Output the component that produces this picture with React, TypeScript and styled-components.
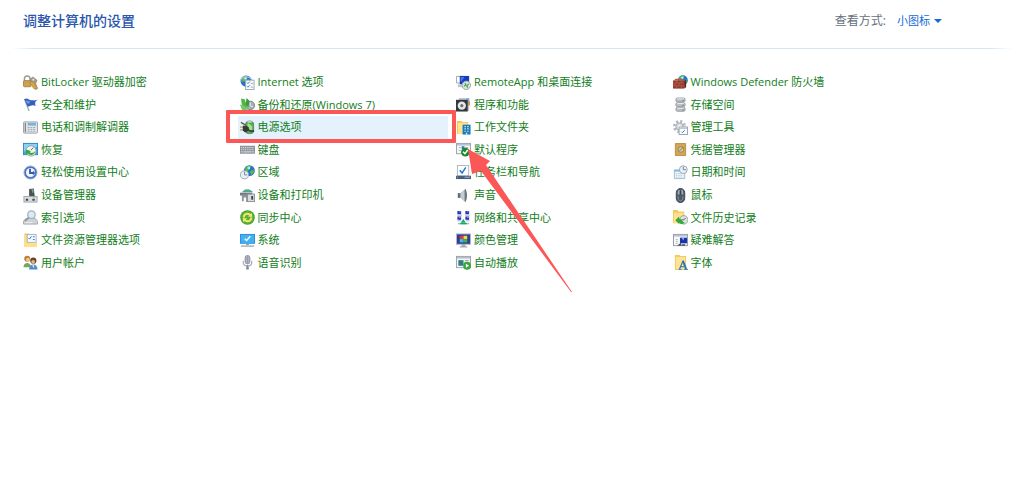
import React from "react";
import styled, { createGlobalStyle } from "styled-components";

const GlobalStyle = createGlobalStyle`
  body {
    margin: 0;
    background: #fff;
    font-family: "Open Sans", "Noto Sans CJK SC", sans-serif;
  }
`;

const Page = styled.main`
  display: flex;
  flex-direction: column;
  min-height: 100vh;
`;

const Header = styled.header`
  display: flex;
  align-items: center;
  justify-content: space-between;
  height: 41px;
  padding: 0 82px 0 23px;
`;

const Title = styled.h1`
  margin: 0;
  font-size: 14px;
  line-height: 20px;
  font-weight: 500;
  color: #2a56ad;
`;

const ViewBy = styled.div`
  display: flex;
  align-items: center;
  gap: 11px;
  font-size: 12px;
  line-height: 20px;
  color: #666f7c;
`;

const SelectWrap = styled.span`
  display: flex;
  align-items: center;
  gap: 4px;
`;

const ViewSelect = styled.select`
  appearance: none;
  border: 0;
  padding: 0;
  background: none;
  color: #0f6bd8;
  font-family: inherit;
  font-size: 11px;
  line-height: 20px;
  cursor: pointer;
`;

const Divider = styled.hr`
  width: calc(100% - 22px);
  height: 1px;
  margin: 7px 11px 22px;
  border: 0;
  background: linear-gradient(to right, #fff, #d3e6f8 24px, #d3e6f8 calc(100% - 24px), #fff);
`;

const List = styled.nav`
  display: grid;
  grid-template-columns: repeat(4, 1fr);
  grid-template-rows: repeat(9, 1fr);
  grid-auto-flow: column;
  min-height: 203px;
  padding: 0 135px 0 23px;
`;

const Cell = styled.div`
  position: relative;
  display: flex;
`;

const Item = styled.a<{ $active?: boolean }>`
  display: flex;
  flex: 1;
  align-items: center;
  gap: 3px;
  margin: 0 8px 0 -2px;
  padding-left: 2px;
  font-size: 11px;
  line-height: 20px;
  white-space: nowrap;
  text-decoration: none;
  color: #117d20;
  background: ${(p) => (p.$active ? "#e4f2fe" : "transparent")};
`;

const Icon = styled.svg`
  flex: none;
  width: 15px;
  height: 15px;
`;

const Outline = styled.span`
  position: absolute;
  inset: -6px 0 -4px -14px;
  border: 4px solid #fb5757;
  border-radius: 1px;
  pointer-events: none;
`;

const Arrow = styled.svg`
  position: absolute;
  z-index: 1;
  top: 32px;
  left: 227px;
  width: 106px;
  height: 146px;
  pointer-events: none;
`;

const globe = (cx: number, cy: number, r: number) => (
  <>
    <circle cx={cx} cy={cy} r={r} fill="#2b6fd0" />
    <path
      d={`M${cx - r * 0.8} ${cy - r * 0.5}q${r * 0.6} ${-r * 0.6} ${r * 1.1} ${-r * 0.3}l${-r * 0.3} ${r * 0.7}l${-r * 0.6} ${r * 0.3}z`}
      fill="#53c04a"
    />
    <path
      d={`M${cx + r * 0.1} ${cy + r * 0.1}l${r * 0.7} ${-r * 0.3}l0 ${r * 0.6}l${-r * 0.5} ${r * 0.4}z`}
      fill="#53c04a"
    />
    <circle cx={cx - r * 0.1} cy={cy - r * 0.5} r={r * 0.25} fill="#b8e4fa" />
  </>
);

const clock = (cx: number, cy: number, r: number) => (
  <>
    <circle cx={cx} cy={cy} r={r} fill="#e9eff4" stroke="#9aa6b0" />
    <path d={`M${cx} ${cy - r + 1}V${cy}h${r - 1.4}`} fill="none" stroke="#6f8393" />
  </>
);

const icons: Record<string, React.ReactNode> = {
  bitlocker: (
    <>
      <path d="M1.5 7V4a3 3 0 0 1 6 0v3" fill="none" stroke="#9a9a92" strokeWidth="1.5" />
      <rect x=".5" y="6" width="8" height="6.500" rx="1" fill="#c9a254" stroke="#a8843f" />
      <path d="M7.500 4.500l3-2.500 4.500 3.500-1.500 3.500 2 5.500-2 1-4-6z" fill="#a39a8c" stroke="#80776a" strokeWidth=".6" />
      <path d="M7 8l3.500-1.500 4.500 7-1.500 1.500-2-.5z" fill="#d6a545" stroke="#a57d33" strokeWidth=".6" />
      <circle cx="11" cy="5" r="1" fill="#eee" />
    </>
  ),
  flag: (
    <>
      <path d="M1.500 2l5 13" stroke="#9aa7b5" strokeWidth="1.400" />
      <path d="M1.500 2.500C5 0 6.500 4 9.500 3.500c2 0 3 .5 6-.5-3 2-3 4-2 6.500-3-1.500-5-.5-8.500 1z" fill="#355fc0" />
      <path d="M3 4c2-1 3 .5 5 .8L6.500 7 4.500 7z" fill="#6f97e2" />
    </>
  ),
  phone: (
    <>
      <rect x=".5" y="2" width="15" height="12" rx="1" fill="#e2e6ea" stroke="#9aa2aa" />
      <path d="M2.500 3v10" stroke="#828b95" strokeWidth="1.500" />
      <rect x="5" y="3" width="9" height="3" fill="#7cb2d4" />
      <path d="M5 8h9M5 10h9M5 12h9" stroke="#9ba4ad" strokeDasharray="2 1" />
    </>
  ),
  recovery: (
    <>
      <rect x=".5" y="1.500" width="15" height="12" fill="#43a5e8" stroke="#2f86cb" />
      <path d="M1 2h14v3L1 10z" fill="#8ed0fa" />
      <circle cx="8.500" cy="9.500" r="5.500" fill="#eff5ef" stroke="#8fa693" />
      <path d="M3 8v5.500l2-1.200c3 3.200 8 1 8-3-1.500 2.500-4 3-6 1.500l1.500-1.300z" fill="#35a544" />
      <path d="M8.500 8.500l2.500-2.500" stroke="#466" />
    </>
  ),
  ease: (
    <>
      <circle cx="8" cy="8" r="7" fill="#4a72c8" stroke="#a9b5cc" />
      <circle cx="8" cy="8" r="4.800" fill="#f2f6fd" />
      <path d="M7.500 4v4.500h4" fill="none" stroke="#2f5cba" strokeWidth="2" />
      <path d="M10.500 6l2.500 2.500-2.500 2.500z" fill="#2f5cba" />
    </>
  ),
  device: (
    <>
      <path d="M6.500 1l5-.5 1 8.500-6 .5z" fill="#4b5157" />
      <path d="M9 2h1.500v3" stroke="#b5bdc5" fill="none" />
      <rect x="1" y="9" width="14" height="6" fill="#dadde0" stroke="#a0a5aa" />
      <path d="M3 12.500h2.500M10 12.500h2.500" stroke="#3f464c" strokeWidth="2" />
      <path d="M11 9.500h1.500" stroke="#36bd45" />
    </>
  ),
  index: (
    <>
      <path d="M3 9h10l2.500 3v3H.5v-3z" fill="#ced3d8" stroke="#a1a7ad" />
      <path d="M2 13.500h8" stroke="#eff2f5" />
      <circle cx="9" cy="5" r="4" fill="#d8ebf8" stroke="#a7b1bb" strokeWidth="1.400" />
      <path d="M6 8l-4 4" stroke="#8c959f" strokeWidth="1.800" />
    </>
  ),
  explorer: (
    <>
      <path d="M1.500.5h4l1 1H12V15H1.500z" fill="#ecc75c" />
      <path d="M1.500 2H4v11H1.500z" fill="#ffe08a" />
      <rect x="4.500" y="1.500" width="9.500" height="8.500" fill="#f7fbff" stroke="#a4b1be" />
      <path d="M6 5.500l1 1 2-3M10.500 4h2M10.500 7h2" stroke="#2874c7" fill="none" />
      <path d="M1.500 10.500H15V15H1.500z" fill="#ffe08a" />
    </>
  ),
  users: (
    <>
      <circle cx="4.500" cy="4" r="3.200" fill="#bb813c" />
      <circle cx="5.200" cy="5" r="2" fill="#f0c797" />
      <path d="M.5 13c0-6 8-6 8 0z" fill="#78a65a" />
      <circle cx="11" cy="6" r="3.300" fill="#684327" />
      <circle cx="10.800" cy="7.200" r="2" fill="#e6b484" />
      <path d="M6.500 15.500c0-7 9-7 9 0z" fill="#4a90c7" />
      <path d="M10 11l1 3 1-3z" fill="#fff" />
    </>
  ),
  internet: (
    <>
      {globe(6.5, 6.5, 6)}
      <path d="M1 7C0 2 7 0 12 4" fill="none" stroke="#abc4d8" strokeWidth="1.200" />
      <rect x="6" y="5.500" width="9" height="10" fill="#f8fbfe" stroke="#9ba8b5" />
      <path d="M7.500 8l1 1 2-2M7.500 12l1 1 2-2" fill="none" stroke="#2874c7" />
      <path d="M11.500 9H14M11.500 13H14" stroke="#a0a8b1" />
    </>
  ),
  backup: (
    <>
      <circle cx="11" cy="9" r="4.500" fill="#a9b0b5" stroke="#767f84" />
      <path d="M11 6v3.500l3 1" fill="none" stroke="#e9eff1" />
      <path d="M1 1.500l4 1 2 6-1 4-4-4z" fill="#51b647" />
      <path d="M7 1l3 3-1 7-3-3z" fill="#3a9a3c" />
      <path d="M0 8l4 1 5 5-2 1.500-5-2z" fill="#6dce5a" />
    </>
  ),
  power: (
    <>
      <rect x="6" y="1.500" width="8.500" height="13" rx="3" fill="#4db046" stroke="#6d7b72" />
      <rect x="8" y="0" width="4.500" height="3" rx="1" fill="#c2cac6" />
      <path d="M8 4c3-1 3 3 5 2v5H8z" fill="#a2e38f" />
      <path d="M0 7.500h4M0 10.500h4" stroke="#b9a35d" strokeWidth="1.300" />
      <path d="M3 6h4l2.500 2v2.500L7 13H5l-2-2z" fill="#343b39" />
      <path d="M8 10.500c3 0 2 3 7 1" fill="none" stroke="#343b39" strokeWidth="1.600" />
      <path d="M1 2.500l5 3" stroke="#555d58" strokeWidth="1.400" />
    </>
  ),
  keyboard: (
    <>
      <rect x="0" y="4" width="16" height="8.500" fill="#8b9299" />
      <path d="M1 6h14M1 8.200h14" stroke="#ced3d8" strokeDasharray="1.400 .6" strokeWidth="1.200" />
      <path d="M1 10.500h14" stroke="#ced3d8" strokeDasharray="2 .6 8.800 .6" strokeWidth="1.200" />
    </>
  ),
  region: (
    <>
      {globe(10, 6, 5.8)}
      {clock(4.8, 10.5, 4.3)}
    </>
  ),
  printers: (
    <>
      <path d="M2 4.500c3-4 9-4 12 0z" fill="#39a0d5" />
      <path d="M5 1.500h5l2 2H4z" fill="#62b44e" />
      <path d="M0 5h13v3H0z" fill="#75797e" />
      <path d="M2 7h7v8H6.500v-5H4v4H2z" fill="#8e9399" />
      <rect x="8" y="6.500" width="7.500" height="8" fill="#d9dcdf" stroke="#8b9095" />
      <path d="M12 8.500h2v4h-2z" fill="#3f444a" />
    </>
  ),
  sync: (
    <>
      <circle cx="8" cy="8" r="7.800" fill="#47a52f" />
      <circle cx="8" cy="8" r="6.600" fill="#58b53a" />
      <path d="M4 8c0-4.500 5-5 7-2.500" fill="none" stroke="#f8e66c" strokeWidth="2" />
      <path d="M12 8c0 4.500-5 5-7 2.500" fill="none" stroke="#f8e66c" strokeWidth="2" />
      <path d="M8.500 7l4.500.5-.5-4.500zM7.500 9L3 8.500l.5 4.500z" fill="#f8e66c" />
    </>
  ),
  system: (
    <>
      <rect x="0" y="1" width="16" height="10.500" fill="#2f8fd8" />
      <path d="M1 2h14v8.500H1z" fill="#42b0f5" />
      <path d="M5 6l2 2 4-4.500" fill="none" stroke="#fff" strokeWidth="1.500" />
      <path d="M6.500 11.500h3V13h-3z" fill="#8b9cab" />
      <path d="M1 14h14" stroke="#9eafbd" strokeWidth="1.500" />
    </>
  ),
  speech: (
    <>
      <rect x="5.500" y=".5" width="5" height="9" rx="2.500" fill="#c3c6d0" stroke="#858999" />
      <path d="M6 3h4M6 5h4M6 7h4M8 1v8" stroke="#858999" strokeWidth=".6" />
      <path d="M3.500 6v2c0 5 9 5 9 0V6" fill="none" stroke="#a2a6b4" strokeWidth="1.200" />
      <path d="M7 11h2l.5 4.500h-3z" fill="#858999" />
    </>
  ),
  remote: (
    <>
      <path d="M.5 1.500h8v7h-8z" fill="#fff" stroke="#9ba5b2" />
      <path d="M4 1h10v9H4z" fill="#163bbd" />
      <path d="M5 2h4L6 7H5z" fill="#4778e2" />
      <path d="M2 10h8v3H2z" fill="#c2c8d1" />
      <circle cx="11" cy="11" r="4.500" fill="#dce2df" stroke="#9aa3a0" />
      <path d="M8.500 12l2-1.500-1-2M13.500 9.500l-2 2 1 2" fill="none" stroke="#37a541" strokeWidth="1.200" />
    </>
  ),
  programs: (
    <>
      <path d="M3 1h9l2 2v12H3z" fill="#c2c7cb" />
      <path d="M11 1h3l1 6h-3z" fill="#7fb0dd" />
      <path d="M12.500 5H15v4h-2.500z" fill="#da8f5b" />
      <rect x="0" y="3" width="12.500" height="12.500" fill="#34383b" />
      <circle cx="6.200" cy="9.200" r="4.400" fill="#e4e8ea" />
      <circle cx="6.200" cy="9.200" r="1.700" fill="#6a6f73" />
    </>
  ),
  work: (
    <>
      <path d="M1 1h5l1 1h6v13H1z" fill="#efc75c" />
      <path d="M2 3h10v12H2z" fill="#ffe294" />
      <path d="M7 5h8.500v10.500H7z" fill="#187ab9" />
      <path d="M9 7h1.500M12 7h1.500M9 9.500h1.500M12 9.500h1.500M9 12h1.500M12 12h1.500" stroke="#d7f1ff" strokeWidth="1.300" />
      <path d="M10.500 13.500h1.500v2h-1.500z" fill="#d7f1ff" />
    </>
  ),
  defaults: (
    <>
      <rect x=".5" y="1.500" width="15" height="11" fill="#f5f7f9" stroke="#98a0a9" />
      <path d="M1 3h14" stroke="#b5bcc3" strokeWidth="1.500" />
      <path d="M3 6h2M3 9h2M10 6h3" stroke="#a0abb6" />
      <path d="M6 4.500h3v3H6z" fill="#287ad0" />
      <circle cx="10" cy="10.800" r="4.600" fill="#188b28" />
      <path d="M7.500 10.500l2 2 3-4" fill="none" stroke="#fff" strokeWidth="1.600" />
    </>
  ),
  taskbar: (
    <>
      <rect x="1.500" y=".5" width="12" height="11" fill="#fff" stroke="#aeb6be" />
      <path d="M4 5.500l2.500 3 4-6" fill="none" stroke="#2179d5" strokeWidth="1.600" />
      <path d="M0 11.500h16V15H0z" fill="#4a5d78" />
      <path d="M1 13h1M9 13h6" stroke="#a5bed7" />
    </>
  ),
  sound: (
    <>
      <path d="M2 5.500h3L10 1v14l-5-4.500H2z" fill="#8c9298" />
      <path d="M5 5.500L9 2v12l-4-3.500z" fill="#c7ccd1" />
      <path d="M9.500.5c3 3 3 12 0 15z" fill="#71777d" />
      <path d="M2 5.500h2v5H2z" fill="#62686d" />
    </>
  ),
  network: (
    <>
      <path d="M1.500 1h4v3.500h-4zM10 1h4v3.500h-4zM1.500 7h4v3.500h-4zM10 7h4v3.500h-4z" fill="#252db0" />
      <path d="M3 2h2M11.500 2h2M3 8h2M11.500 8h2" stroke="#8ba9ff" />
      <path d="M1.500 5.500h5M9.500 5.500h5M1.500 11.500h4M10.500 11.500h4" stroke="#a8b2be" />
      <path d="M7.800 9.500l2.700 4H5z" fill="#1aa66d" />
      <path d="M2 14.500h12" stroke="#9bc7b4" strokeWidth="1.500" />
      <path d="M4.500 14.500h7" stroke="#1aa66d" strokeWidth="1.500" />
    </>
  ),
  color: (
    <>
      <rect x=".5" y="1" width="15" height="11" fill="#343b98" stroke="#b3b8c2" />
      <path d="M4 3h4v3.500H4z" fill="#e13831" />
      <path d="M8 3h4v3.500H8z" fill="#eeda36" />
      <path d="M4 6.500h4V10H4z" fill="#35c2e3" />
      <path d="M8 6.500h4V10H8z" fill="#39b84b" />
      <path d="M6 12h4v2h2v1.500H4V14h2z" fill="#a4abb3" />
    </>
  ),
  autoplay: (
    <>
      <rect x=".5" y="1.500" width="15" height="12" fill="#f3f6f8" stroke="#98a1aa" />
      <path d="M1 3h14" stroke="#b2b9c0" strokeWidth="1.500" />
      <path d="M2.500 5.500H8v6H2.500z" fill="#317d83" />
      <path d="M9.500 6h4M9.500 8h4" stroke="#929ca5" />
      <circle cx="11.800" cy="11.500" r="4.200" fill="#3aa63c" />
      <path d="M10.500 9.300v4.400l3.500-2.200z" fill="#fff" />
    </>
  ),
  firewall: (
    <>
      {globe(10.5, 5.5, 5.3)}
      <path d="M0 6h12v8.500H0z" fill="#963a2d" />
      <path d="M0 6l3-2h7l2 2z" fill="#b35a4b" />
      <path d="M0 8.500h12M0 11.500h12M4 6v2.500M9 6v2.500M2 8.500v3M6.500 8.500v3M4 11.500v3M9 11.500v3" stroke="#b96f60" strokeWidth=".6" />
      <path d="M12 6l2-1v8l-2 1.500z" fill="#682016" />
    </>
  ),
  storage: (
    <>
      {[1, 6, 11].map((y) => (
        <g key={y}>
          <rect x="3" y={y} width="10" height="4.300" rx="1.800" fill="#b9bec3" stroke="#8c9298" strokeWidth=".8" />
          <path d={`M4.500 ${y + 1}h7`} stroke="#eef1f3" />
          <path d={`M10 ${y + 2.8}h1.500`} stroke="#45894f" />
        </g>
      ))}
    </>
  ),
  tools: (
    <>
      <circle cx="7" cy="7" r="5.500" fill="none" stroke="#b0b7be" strokeWidth="3" strokeDasharray="2.200 2.120" />
      <circle cx="7" cy="7" r="4" fill="#d6dbe0" stroke="#a3abb3" />
      <circle cx="7" cy="7" r="1.600" fill="#fff" />
      <rect x="6.500" y="7.500" width="9" height="8" fill="#fafcff" stroke="#98a2ac" />
      <path d="M7 9h8" stroke="#b5bec7" />
      <path d="M9 12.500l1 1 2.500-2.500" fill="none" stroke="#2a75c5" />
    </>
  ),
  credential: (
    <>
      <rect x="2" y="1" width="12" height="14" rx="1" fill="#c0944a" />
      <path d="M3 2h10v12H3z" fill="#cfa558" />
      <circle cx="8.500" cy="8" r="3" fill="#dcc896" stroke="#9c8450" />
      <path d="M7 9.500l4-4" stroke="#7e7352" />
    </>
  ),
  date: (
    <>
      <path d="M1 5h12v10H1z" fill="#f0f7fb" />
      <path d="M1.500 5.500h11v9h-11z" fill="none" stroke="#a5bccb" />
      <path d="M1 5h12v2H1z" fill="#7fbbdf" />
      <path d="M3 9h8M3 11h8M3 13h8" stroke="#a5c7dc" strokeDasharray="1.500 1" />
      {clock(11, 5, 4.2)}
    </>
  ),
  mouse: (
    <>
      <rect x="3.500" y=".5" width="9" height="15" rx="4.500" fill="#4e5a68" stroke="#39424c" />
      <path d="M5 7c0-7 2-5 2-5v5zM11 7c0-7-2-5-2-5v5z" fill="#a2aebb" />
      <path d="M8 3v4" stroke="#39424c" strokeWidth="1.200" />
      <path d="M5.500 9v2.500c1 3 4 3 5 0V9" fill="none" stroke="#8a98a6" />
    </>
  ),
  history: (
    <>
      <path d="M0 0h5l1 1.500h6V14H0z" fill="#f1ca5d" />
      <path d="M1 3h10v11H1z" fill="#ffe18c" />
      <circle cx="11.500" cy="10.500" r="4.500" fill="#dce3df" stroke="#929d96" />
      <path d="M11.500 10.500l2-2M11.500 10.500H9" stroke="#4e5c54" />
      <path d="M2.500 11l4-4v2.500c3-.5 3 3.500 6 4-3.500 2.500-6 1-6-.5V15z" fill="#32a83e" />
    </>
  ),
  trouble: (
    <>
      <rect x=".5" y="1.500" width="15" height="12" fill="#f5f7fa" stroke="#949ca7" />
      <path d="M1 3h14" stroke="#b5bbc4" strokeWidth="1.500" />
      <path d="M3 7h2M3 9h2M3 11h2" stroke="#b0b8c2" />
      <path d="M7.500 5H15v6H7.500z" fill="#1a31ad" />
      <path d="M9 5l2 3 1-3z" fill="#8bb3f5" />
      <path d="M4.500 13.500l4-3.500v3.500zM9 12h4v1.500H9z" fill="#44505e" />
    </>
  ),
  fonts: (
    <>
      <path d="M2 0h5l1 1h6v15H2z" fill="#f1ca5d" />
      <path d="M3 2h10v13H3z" fill="#ffe395" />
      <path d="M7 15l3.500-8.500M8 12.500h4" fill="none" stroke="#2376b6" strokeWidth="1.200" />
      <path d="M10.500 6l3.500 9" stroke="#2376b6" strokeWidth="2" />
      <path d="M6 15.300h3M12 15.300h4" stroke="#2376b6" />
    </>
  ),
};

const entries: [string, string][] = [
  ["bitlocker", "BitLocker 驱动器加密"],
  ["flag", "安全和维护"],
  ["phone", "电话和调制解调器"],
  ["recovery", "恢复"],
  ["ease", "轻松使用设置中心"],
  ["device", "设备管理器"],
  ["index", "索引选项"],
  ["explorer", "文件资源管理器选项"],
  ["users", "用户帐户"],
  ["internet", "Internet 选项"],
  ["backup", "备份和还原(Windows 7)"],
  ["power", "电源选项"],
  ["keyboard", "键盘"],
  ["region", "区域"],
  ["printers", "设备和打印机"],
  ["sync", "同步中心"],
  ["system", "系统"],
  ["speech", "语音识别"],
  ["remote", "RemoteApp 和桌面连接"],
  ["programs", "程序和功能"],
  ["work", "工作文件夹"],
  ["defaults", "默认程序"],
  ["taskbar", "任务栏和导航"],
  ["sound", "声音"],
  ["network", "网络和共享中心"],
  ["color", "颜色管理"],
  ["autoplay", "自动播放"],
  ["firewall", "Windows Defender 防火墙"],
  ["storage", "存储空间"],
  ["tools", "管理工具"],
  ["credential", "凭据管理器"],
  ["date", "日期和时间"],
  ["mouse", "鼠标"],
  ["history", "文件历史记录"],
  ["trouble", "疑难解答"],
  ["fonts", "字体"],
];

const selected = "power";

export default function App() {
  return (
    <Page lang="zh-CN">
      <GlobalStyle />
      <Header>
        <Title>调整计算机的设置</Title>
        <ViewBy>
          <label htmlFor="view">查看方式:</label>
          <SelectWrap>
            <ViewSelect id="view" defaultValue="small">
              <option value="small">小图标</option>
            </ViewSelect>
            <svg width="8" height="4" viewBox="0 0 8 4" aria-hidden="true">
              <path d="M0 0h8L4 4z" fill="#0f6bd8" />
            </svg>
          </SelectWrap>
        </ViewBy>
      </Header>
      <Divider />
      <List>
        {entries.map(([id, label]) => (
          <Cell key={id}>
            <Item href={`#${id}`} $active={id === selected}>
              <Icon viewBox="0 0 16 16" aria-hidden="true">
                {icons[id]}
              </Icon>
              {label}
            </Item>
            {id === selected && (
              <>
                <Outline />
                <Arrow viewBox="0 0 106 146" aria-hidden="true">
                  <path d="M1 1L23 13L19 17L105 144L104 144L14 23L5 26Z" fill="#fb5757" />
                </Arrow>
              </>
            )}
          </Cell>
        ))}
      </List>
    </Page>
  );
}
